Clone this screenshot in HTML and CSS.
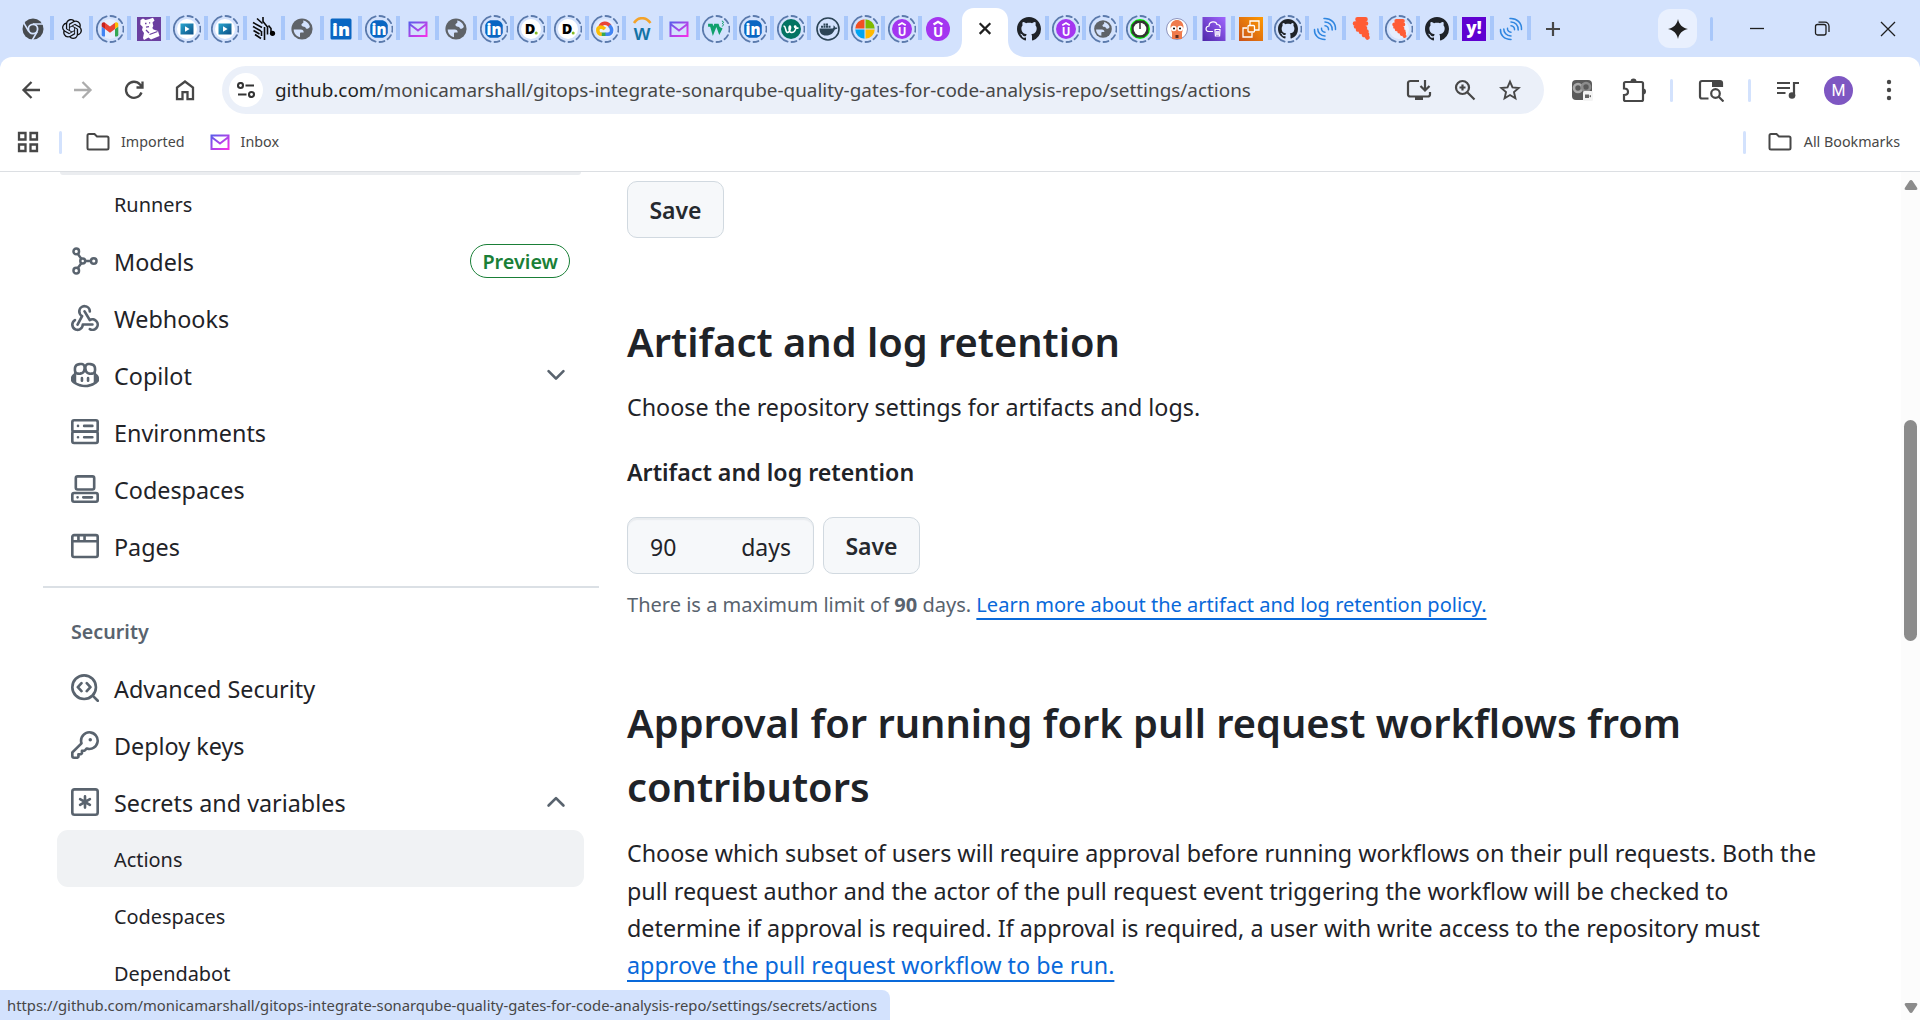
FILE: index.html
```html
<!DOCTYPE html>
<html lang="en">
<head>
<meta charset="utf-8">
<title>Actions settings</title>
<link rel="stylesheet" href="styles.css">
</head>
<body>
<svg class="defs" width="0" height="0" aria-hidden="true">
  <defs>
    <linearGradient id="mailGrad" x1="0" y1="0" x2="1" y2="1"><stop offset="0" stop-color="#5b5bea"/><stop offset="1" stop-color="#f531e8"/></linearGradient>
    <linearGradient id="playGrad" x1="0" y1="0" x2="1" y2="1"><stop offset="0" stop-color="#2ba7cf"/><stop offset="1" stop-color="#0b4f86"/></linearGradient>
    <linearGradient id="purpleGrad" x1="0" y1="1" x2="1" y2="0"><stop offset="0" stop-color="#4d27a8"/><stop offset="1" stop-color="#a166ff"/></linearGradient>
    <linearGradient id="orangeGrad" x1="0" y1="1" x2="1" y2="0"><stop offset="0" stop-color="#c8511b"/><stop offset="1" stop-color="#f90"/></linearGradient>
    <clipPath id="round"><circle cx="14" cy="14" r="9.800"/></clipPath>
  </defs>
  <symbol id="ring" viewBox="0 0 28 28">
    <g fill="none" stroke="#5b7aac" stroke-width="1.8" stroke-linecap="round"><path d="M10.6 1.4A13 13 0 0 0 10.6 26.6"/><path d="M14.5 1A13 13 0 0 1 14.5 27" stroke-dasharray="5.3 3.6"/></g>
  </symbol>
  <symbol id="chrome" viewBox="0 0 24 24">
    <circle cx="12" cy="12" r="10.500" fill="#474b4f"/><circle cx="12" cy="12" r="4.600" fill="#474b4f" stroke="#d3e2fd" stroke-width="1.800"/>
    <path d="M12 7h10M7.800 14.500 2.800 6M16.300 14.500 11.300 23" stroke="#d3e2fd" stroke-width="1.500"/>
  </symbol>
  <symbol id="openai" viewBox="0 0 24 24"><path fill="#111" d="M22.2819 9.8211a5.9847 5.9847 0 0 0-.5157-4.9108 6.0462 6.0462 0 0 0-6.5098-2.9A6.0651 6.0651 0 0 0 4.9807 4.1818a5.9847 5.9847 0 0 0-3.9977 2.9 6.0462 6.0462 0 0 0 .7427 7.0966 5.98 5.98 0 0 0 .511 4.9107 6.051 6.051 0 0 0 6.5146 2.9001A5.9847 5.9847 0 0 0 13.2599 24a6.0557 6.0557 0 0 0 5.7718-4.2058 5.9894 5.9894 0 0 0 3.9977-2.9001 6.0557 6.0557 0 0 0-.7475-7.0729zm-9.022 12.6081a4.4755 4.4755 0 0 1-2.8764-1.0408l.1419-.0804 4.7783-2.7582a.7948.7948 0 0 0 .3927-.6813v-6.7369l2.02 1.1686a.071.071 0 0 1 .038.052v5.5826a4.504 4.504 0 0 1-4.4945 4.4944zm-9.6607-4.1254a4.4708 4.4708 0 0 1-.5346-3.0137l.142.0852 4.783 2.7582a.7712.7712 0 0 0 .7806 0l5.8428-3.3685v2.3324a.0804.0804 0 0 1-.0332.0615L9.74 19.9502a4.4992 4.4992 0 0 1-6.1408-1.6464zM2.3408 7.8956a4.485 4.485 0 0 1 2.3655-1.9728V11.6a.7664.7664 0 0 0 .3879.6765l5.8144 3.3543-2.0201 1.1685a.0757.0757 0 0 1-.071 0l-4.8303-2.7865A4.504 4.504 0 0 1 2.3408 7.872zm16.5963 3.8558L13.1038 8.364 15.1192 7.2a.0757.0757 0 0 1 .071 0l4.8303 2.7913a4.4944 4.4944 0 0 1-.6765 8.1042v-5.6772a.79.79 0 0 0-.407-.667zm2.0107-3.0231l-.142-.0852-4.7735-2.7818a.7759.7759 0 0 0-.7854 0L9.409 9.2297V6.8974a.0662.0662 0 0 1 .0284-.0615l4.8303-2.7866a4.4992 4.4992 0 0 1 6.6802 4.66zM8.3065 12.863l-2.02-1.1638a.0804.0804 0 0 1-.038-.0567V6.0742a4.4992 4.4992 0 0 1 7.3757-3.4537l-.142.0805L8.704 5.459a.7948.7948 0 0 0-.3927.6813zm1.0976-2.3654l2.602-1.4998 2.6069 1.4998v2.9994l-2.5974 1.4997-2.6067-1.4997Z"/></symbol>
  <symbol id="gmail" viewBox="0 0 24 24"><path fill="#4285f4" d="M2 19V9l4 3v9H4a2 2 0 0 1-2-2z"/><path fill="#34a853" d="M22 19V9l-4 3v9h2a2 2 0 0 0 2-2z"/><path fill="#c5221f" d="M2 6.500C2 4 4.500 3.300 6 4.500V12L2 9z"/><path fill="#fbbc04" d="M22 6.500C22 4 19.500 3.300 18 4.500V12l4-3z"/><path fill="#ea4335" d="M6 4.500l6 4.500 6-4.500V12l-6 4.500L6 12z"/></symbol>
  <symbol id="bear" viewBox="0 0 24 24"><path fill="#6b3fa0" d="M0 0h24v24H0z"/><path fill="#fff" d="M3.500 3 6 1.500 8.500 3l4-1L16 .8l1.500 2.700-2 2 .8 3.500-1 2 1.200 1.500 4.500 1.500 1.500 5-8.500 3.500-2.500-2-4.500 2.500-1-2 1-5-2-3 .8-3-2.500-2.500z"/><path d="M12.500 17.500l8-3M8 6.500h1.500M12 5.800h1.200M9 10.200l3-.5M9 13l3 3" stroke="#6b3fa0" stroke-width="1.300"/></symbol>
  <symbol id="play" viewBox="0 0 20 20"><circle cx="10" cy="10" r="10" fill="#fff"/><path fill="url(#playGrad)" d="M3.500 4.500h13v11h-13z"/><path fill="#fff" d="M8 7.300v5.400l4.600-2.700z"/></symbol>
  <symbol id="zebra" viewBox="0 0 24 24"><g fill="none" stroke="#0a0a0a" stroke-width="1.600"><path d="M1 5.500l9 5M1 9.500l8 4.500M1.500 13.500l6 3.500M3 17.500l6 4M5 1.500l5.500 5M11 0v4.500l4.500 5.500v7.500M12.500 10v13M9.500 14v5M16.500 8.500l2.500 3v5"/></g><circle cx="20.500" cy="16.300" r="2.600"/></symbol>
  <symbol id="globe" viewBox="0 0 24 24"><circle cx="12" cy="12" r="10.600" fill="#5f6368"/><path fill="#d3e2fd" d="M3.700 12.500h7c2 0 3 1.200 3 3h-2.500c-.7 0-1.200.6-1.200 1.200v3.500C6.500 19.500 3.700 16.500 3.700 12.500zM13 3.600c3 .4 5.500 2.500 6.700 5.300.4 1.200-.5 2-1.600 2.600-1.300.7-2.300 0-2.600-1-.3-1.400-2.500-.6-3.500-1.600-1.500-1.300 0-2.200 1-2.900.8-.6.400-1.600 0-2.400z"/></symbol>
  <symbol id="tile" viewBox="0 0 24 24"><rect x="1.500" y="1.500" width="21" height="21" rx="1.500" fill="#0a66c2"/></symbol>
  <symbol id="mail" viewBox="0 0 24 24"><path d="M3.500 5.500h17v13.500h-17zM3.500 7l8.500 6.500L20.500 7" fill="none" stroke="url(#mailGrad)" stroke-width="2"/></symbol>
  <symbol id="dot" viewBox="0 0 20 20"><circle cx="10" cy="10" r="10" fill="#fff"/><circle cx="15.200" cy="14" r="1.500" fill="#86bc25"/></symbol>
  <symbol id="gcloud" viewBox="0 0 24 24"><g fill="none" stroke-width="4.200"><path stroke="#ea4335" d="M6 9.500c1.500-5 8.500-6.200 12-1"/><path stroke="#4285f4" d="M17 8c2 1.500 3 3 3 5.500 0 3-2 4.800-4.500 4.800H12"/><path stroke="#34a853" d="M12.500 18.300H7.500"/><path stroke="#fbbc04" d="M8 18.300c-5.500 0-6.500-8-1-8.800 2.500 0 3.500 1 5 2.500"/></g></symbol>
  <symbol id="greenw" viewBox="0 0 24 24"><path d="M2.500 7.500h4l2 7 2.800-7h2.400l2.500 7 2-4" fill="none" stroke="#10a06c" stroke-width="3.800"/><path d="M19 2.500c2.500 0 2.500 2.500.5 3 2 0 2 3-.5 3" fill="none" stroke="#10a06c" stroke-width="1.200"/></symbol>
  <symbol id="script" viewBox="0 0 20 20"><circle cx="10" cy="10" r="10" fill="#037362"/><path d="M2.500 7.500c2.500-1.500 1.500 5.500 4 6 2.500 0 4-6.500 2.500-6.500s-1.500 6 1.500 6.500c3.500.3 5.500-5.500 3.800-6.500-1.500-.5-1 3.500 3.200 1.800" fill="none" stroke="#fff" stroke-width="1.500"/></symbol>
  <symbol id="docker" viewBox="0 0 24 24"><circle cx="12" cy="12" r="11" fill="none" stroke="#2c4456" stroke-width="1.600"/><path fill="#2c4456" d="M3.500 11.500h13c1 0 1.300-2 .8-3 1.200.4 1.800 1.200 1.900 2 1 0 1.800.1 2.300.6-.6 1.100-1.600 1.400-2.700 1.400C17 17 13.800 18.500 10 18.500c-4.500 0-6.500-2.500-6.500-7zM5 8.800h2v2H5zM7.500 8.800h2v2h-2zM10 8.800h2v2h-2zM12.500 8.800h2v2h-2zM7.500 6.400h2v2h-2zM10 6.400h2v2h-2z"/></symbol>
  <symbol id="ms" viewBox="0 0 20 20"><path fill="#f25022" d="M0 0h9.500v9.500H0z"/><path fill="#7fba00" d="M10.500 0H20v9.500h-9.500z"/><path fill="#00a4ef" d="M0 10.500h9.500V20H0z"/><path fill="#ffb900" d="M10.500 10.500H20V20h-9.500z"/></symbol>
  <symbol id="caret" viewBox="0 0 24 24"><circle cx="12" cy="12" r="12" fill="#a435f0"/><path d="M7.500 7.500 12 4.800l4.500 2.700" fill="none" stroke="#fff" stroke-width="2.200"/></symbol>
  <symbol id="github" viewBox="0 0 16 16"><path fill="#1f2328" d="M8 0C3.580 0 0 3.580 0 8c0 3.540 2.290 6.530 5.470 7.590.4.070.55-.17.55-.38 0-.19-.01-.82-.01-1.490-2.010.37-2.530-.49-2.690-.94-.09-.23-.48-.94-.82-1.130-.28-.15-.68-.52-.01-.53.63-.01 1.080.58 1.230.82.72 1.210 1.870.87 2.330.66.070-.52.28-.87.51-1.070-1.780-.2-3.640-.89-3.640-3.950 0-.87.31-1.590.82-2.150-.08-.2-.36-1.020.08-2.120 0 0 .67-.21 2.200.82.64-.18 1.320-.27 2-.27.68 0 1.360.09 2 .27 1.530-1.040 2.200-.82 2.200-.82.44 1.100.16 1.920.08 2.120.51.56.82 1.270.82 2.150 0 3.070-1.870 3.750-3.650 3.950.29.25.54.73.54 1.480 0 1.070-.01 1.930-.01 2.200 0 .21.15.46.55.38A8.013 8.013 0 0 0 16 8c0-4.420-3.580-8-8-8z"/></symbol>
  <symbol id="clock" viewBox="0 0 20 20"><circle cx="10" cy="10" r="10" fill="#0f0"/><path fill="#333" d="M6 1.500h8L18.500 6v8L14 18.500H6L1.500 14V6z"/><circle cx="10" cy="10" r="6.300" fill="#fff"/><path d="M10 3v7" stroke="#333" stroke-width="1.500"/></symbol>
  <symbol id="argo" viewBox="0 0 24 24"><circle cx="12" cy="12" r="10.500" fill="#fff" stroke="#8d93bd"/><path fill="#ef7b4d" d="M5.500 10c0-9.500 13-9.500 13 0l-1.500 6v6H7v-6z"/><circle cx="8.800" cy="11.500" r="2.800" fill="#fff"/><circle cx="15.200" cy="11.500" r="2.800" fill="#fff"/><circle cx="9" cy="11.500" r="1"/><circle cx="15" cy="11.500" r="1"/><path d="M10.500 18h3v3h-3z" fill="#5b2d22"/></symbol>
  <symbol id="ecr" viewBox="0 0 24 24"><path fill="url(#purpleGrad)" d="M.5 0h23v24H.5z"/><g fill="none" stroke="#fff" stroke-width="1.200"><path d="M11 14.500H7c-4 0-4-5 0-5.500 0-5 7-5.500 8-1.500 2.500 0 3.500 1.500 3.300 3.500"/><path d="M12.500 12.500h6M13 13l.4 6h4.200l.4-6M14.800 14v4M16.200 14v4"/></g></symbol>
  <symbol id="ec2" viewBox="0 0 24 24"><path fill="url(#orangeGrad)" d="M0 0h24v24H0z"/><g fill="none" stroke="#fff" stroke-width="1.300"><path d="M11 8V4h9v9h-4M8 11H4v9h9v-4"/><rect x="9" y="8.500" width="6.500" height="6.500" rx="1"/></g></symbol>
  <symbol id="signal" viewBox="0 0 24 24"><g fill="none" stroke="#2f86e0" stroke-width="1.500" stroke-linecap="round"><path d="M12 8.700a3.600 3.600 0 0 1 3.500 4M12 5c4.500 0 7.300 3.500 7.200 8M11 1.500C18 1 22.800 6 22.500 12.500M12 15.300a3.600 3.600 0 0 1-3.500-4M12 19c-4.500 0-7.300-3.500-7.200-7M12 22.500C5 22.500 1.200 18 1.500 12.500"/></g></symbol>
  <symbol id="flame" viewBox="0 0 24 24"><path d="M7.500 2.300h8M5 6.500h11M6 9.500h7M8 12.500l7-1.500M11 15l5.500-.5M14 18l3-1M17.500 20.500l-1-2" fill="none" stroke="#ff5c35" stroke-width="4.600" stroke-linecap="round"/></symbol>
  <symbol id="violet" viewBox="0 0 24 24"><path fill="#5f01d1" d="M0 0h24v24H0z"/></symbol>
  <symbol id="folder" viewBox="0 0 24 20"><path d="M1.500 16V3.500c0-1 .6-1.500 1.500-1.500h5.500l2.500 2.500h10c1 0 1.500.6 1.500 1.500v10c0 1-.6 1.500-1.500 1.500h-18c-1 0-1.500-.6-1.500-1.500z" fill="none" stroke="#474747" stroke-width="2"/></symbol>
</svg>

<header class="tabs">
  <div class="group wide">
    <span class="tab"><svg class="fav"><use href="#chrome"/></svg></span>
    <span class="tab"><svg class="fav s20"><use href="#openai"/></svg></span>
    <span class="tab"><svg class="ringed" viewBox="0 0 28 28"><use href="#ring"/><circle cx="14" cy="14" r="10" fill="#e6eefe"/><use href="#gmail" x="4" y="4" width="20" height="20"/></svg></span>
    <span class="tab"><svg class="fav"><use href="#bear"/></svg></span>
    <span class="tab"><svg class="ringed" viewBox="0 0 28 28"><use href="#ring"/><use href="#play" x="4" y="4" width="20" height="20"/></svg></span>
    <span class="tab"><svg class="ringed" viewBox="0 0 28 28"><use href="#ring"/><use href="#play" x="4" y="4" width="20" height="20"/></svg></span>
    <span class="tab"><svg class="fav"><use href="#zebra"/></svg></span>
    <span class="tab"><svg class="fav"><use href="#globe"/></svg></span>
    <span class="tab"><svg class="fav" viewBox="0 0 24 24"><use href="#tile"/><text class="logo" x="12" y="19" font-size="18">in</text></svg></span>
    <span class="tab"><svg class="ringed" viewBox="0 0 28 28"><use href="#ring"/><g clip-path="url(#round)"><use href="#tile" x="4" y="4" width="20" height="20"/></g><text class="logo" x="14" y="20" font-size="15">in</text></svg></span>
    <span class="tab"><svg class="fav"><use href="#mail"/></svg></span>
    <span class="tab"><svg class="fav"><use href="#globe"/></svg></span>
  </div>
  <div class="group before">
    <span class="tab"><svg class="ringed" viewBox="0 0 28 28"><use href="#ring"/><g clip-path="url(#round)"><use href="#tile" x="4" y="4" width="20" height="20"/></g><text class="logo" x="14" y="20" font-size="15">in</text></svg></span>
    <span class="tab"><svg class="ringed" viewBox="0 0 28 28"><use href="#ring"/><use href="#dot" x="4" y="4" width="20" height="20"/><text class="logo black" x="13" y="19" font-size="14.500">D</text></svg></span>
    <span class="tab"><svg class="ringed" viewBox="0 0 28 28"><use href="#ring"/><use href="#dot" x="4" y="4" width="20" height="20"/><text class="logo black" x="13" y="19" font-size="14.500">D</text></svg></span>
    <span class="tab"><svg class="ringed" viewBox="0 0 28 28"><use href="#ring"/><circle cx="14" cy="14" r="10" fill="#e6eefe"/><use href="#gcloud" x="4" y="4" width="20" height="20"/></svg></span>
    <span class="tab"><svg class="fav" viewBox="0 0 24 24"><path d="M4 6C8-.5 16-.5 20.500 6" fill="none" stroke="#f4a32a" stroke-width="2.500"/><text class="logo teal" x="12" y="22.500" font-size="21">w</text></svg></span>
    <span class="tab"><svg class="fav"><use href="#mail"/></svg></span>
    <span class="tab"><svg class="ringed" viewBox="0 0 28 28"><use href="#ring"/><use href="#greenw" x="4" y="4" width="20" height="20"/></svg></span>
    <span class="tab"><svg class="ringed" viewBox="0 0 28 28"><use href="#ring"/><g clip-path="url(#round)"><use href="#tile" x="4" y="4" width="20" height="20"/></g><text class="logo" x="14" y="20" font-size="15">in</text></svg></span>
    <span class="tab"><svg class="ringed" viewBox="0 0 28 28"><use href="#ring"/><use href="#script" x="4" y="4" width="20" height="20"/></svg></span>
    <span class="tab"><svg class="fav"><use href="#docker"/></svg></span>
    <span class="tab"><svg class="ringed" viewBox="0 0 28 28"><use href="#ring"/><g clip-path="url(#round)"><use href="#ms" x="4" y="4" width="20" height="20"/></g></svg></span>
    <span class="tab"><svg class="ringed" viewBox="0 0 28 28"><use href="#ring"/><use href="#caret" x="4" y="4" width="20" height="20"/><text class="logo bold" x="14" y="20.500" font-size="11.500">U</text></svg></span>
    <span class="tab last"><svg class="fav" viewBox="0 0 24 24"><use href="#caret"/><text class="logo bold" x="12" y="19.500" font-size="13.500">U</text></svg></span>
  </div>
  <div class="active">
    <svg class="shape" width="84" height="49" viewBox="0 0 84 49"><path fill="#fff" d="M0 49c12 0 19-7 19-17V12C19 5 24 0 31 0h22c7 0 12 5 12 12v20c0 10 7 17 19 17z"/><path d="M36.700 15.300l10.600 10.600M47.300 15.300 36.700 25.900" stroke="#1f1f1f" stroke-width="2.200"/></svg>
  </div>
  <div class="group after">
    <span class="tab"><svg class="fav"><use href="#github"/></svg></span>
    <span class="tab"><svg class="ringed" viewBox="0 0 28 28"><use href="#ring"/><use href="#caret" x="4" y="4" width="20" height="20"/><text class="logo bold" x="14" y="20.500" font-size="11.500">U</text></svg></span>
    <span class="tab"><svg class="ringed" viewBox="0 0 28 28"><use href="#ring"/><use href="#globe" x="4" y="4" width="20" height="20"/></svg></span>
    <span class="tab"><svg class="ringed" viewBox="0 0 28 28"><use href="#ring"/><use href="#clock" x="4" y="4" width="20" height="20"/></svg></span>
    <span class="tab"><svg class="fav"><use href="#argo"/></svg></span>
    <span class="tab"><svg class="fav"><use href="#ecr"/></svg></span>
    <span class="tab"><svg class="fav"><use href="#ec2"/></svg></span>
    <span class="tab"><svg class="ringed" viewBox="0 0 28 28"><use href="#ring"/><use href="#github" x="4" y="4" width="20" height="20"/></svg></span>
    <span class="tab"><svg class="fav"><use href="#signal"/></svg></span>
    <span class="tab"><svg class="fav"><use href="#flame"/></svg></span>
    <span class="tab"><svg class="ringed" viewBox="0 0 28 28"><use href="#ring"/><circle cx="14" cy="14" r="10" fill="#e6eefe"/><use href="#flame" x="5" y="4" width="20" height="20"/></svg></span>
    <span class="tab"><svg class="fav"><use href="#github"/></svg></span>
    <span class="tab"><svg class="fav" viewBox="0 0 24 24"><use href="#violet"/><text class="logo" x="12" y="17" font-size="17">y!</text></svg></span>
    <span class="tab"><svg class="fav"><use href="#signal"/></svg></span>
  </div>
  <svg class="plus" width="16" height="16" viewBox="0 0 16 16"><path d="M8 1v14M1 8h14" stroke="#474747" stroke-width="2.200"/></svg>
  <div class="window">
    <span class="gemini"><svg width="20" height="20" viewBox="0 0 20 20"><path fill="#1f1f1f" d="M10 0c1 5.500 4.500 9 10 10-5.500 1-9 4.500-10 10C9 14.500 5.500 11 0 10 5.500 9 9 5.500 10 0z"/></svg></span>
    <i class="divider"></i>
    <svg class="minimize" width="14" height="14" viewBox="0 0 14 14"><path d="M0 6.500h14" stroke="#1f1f1f" stroke-width="1.300"/></svg>
    <svg class="restore" width="16" height="16" viewBox="0 0 16 16"><g fill="none" stroke="#1f1f1f" stroke-width="1.300"><rect x="1.500" y="3.500" width="10.500" height="10.500" rx="2"/><path d="M4.500 1.200h6.500a4 4 0 0 1 4 4V11"/></g></svg>
    <svg class="close" width="16" height="16" viewBox="0 0 16 16"><path d="M1 1l14 14M15 1 1 15" stroke="#1f1f1f" stroke-width="1.300"/></svg>
  </div>
</header>

<section class="chrome">
  <div class="toolbar">
    <nav class="nav">
      <svg width="26" height="26" viewBox="0 0 26 26"><path d="M21 13H5M12.500 5l-8 8 8 8" fill="none" stroke="#474747" stroke-width="2.300"/></svg>
      <svg width="26" height="26" viewBox="0 0 26 26"><path d="M4 13h16M12.500 5l8 8-8 8" fill="none" stroke="#acacac" stroke-width="2.300"/></svg>
      <svg width="26" height="26" viewBox="0 0 26 26"><path d="M20.500 15.500A8 8 0 1 1 19 7.500l2 2.500M21.500 4.500v6h-6" fill="none" stroke="#474747" stroke-width="2.300"/></svg>
      <svg width="26" height="26" viewBox="0 0 26 26"><path d="M5 22.200V10.500l8-6 8 6v11.700h-5.500v-7h-5v7z" fill="none" stroke="#474747" stroke-width="2.300"/></svg>
    </nav>
    <div class="omnibox">
      <span class="site"><svg width="18" height="16" viewBox="0 0 18 16"><g fill="none" stroke="#333" stroke-width="2.100"><circle cx="3.500" cy="3.500" r="2.500"/><circle cx="14.500" cy="12.500" r="2.500"/><path d="M8.500 3.500H17M1 12.500h8.500"/></g></svg></span>
      <span class="url">github.com<span class="path">/monicamarshall/gitops-integrate-sonarqube-quality-gates-for-code-analysis-repo/settings/actions</span></span>
      <div class="actions">
        <svg width="26" height="24" viewBox="0 0 26 24"><path d="M13 3H4.500C3 3 2 4 2 5v11.500c0 1 1 2 2.500 2h17c1.500 0 2.500-1 2.500-2V14M19 2v10M14.500 8l4.500 4.500L23.500 8" fill="none" stroke="#474747" stroke-width="2.200"/><path fill="#474747" d="M9 18h8v4H9z"/></svg>
        <svg width="24" height="24" viewBox="0 0 24 24"><g fill="none" stroke="#474747" stroke-width="2.200"><circle cx="9.500" cy="9.500" r="6.500"/><path d="M14.500 14.500l7 7M6.500 9.500h6M9.500 6.500v6"/></g></svg>
        <svg width="24" height="24" viewBox="0 0 24 24"><path d="M12 3.700l2.500 5.700 6.200.6-4.700 4.100 1.400 6.100L12 17l-5.400 3.200L8 14.100 3.300 10l6.200-.6z" fill="none" stroke="#474747" stroke-width="1.900"/></svg>
      </div>
    </div>
    <div class="tools">
      <svg class="ext" width="22" height="22" viewBox="0 0 22 22"><rect x="1" y="1" width="20" height="20" rx="4" fill="#5a5a5a"/><circle cx="7" cy="9" r="4" fill="none" stroke="#a9a9a9" stroke-width="2.600"/><circle cx="15" cy="8" r="4" fill="none" stroke="#8c8c8c" stroke-width="2.600"/><rect x="12" y="12" width="10" height="10" rx="1.500" fill="#f4f4f4"/><path fill="#666" d="M14 15.500h4v3.500h-4zM18 17l2-1v2.500z"/></svg>
      <svg class="puzzle" width="26" height="26" viewBox="0 0 26 26"><path d="M3 6.500C3 5.500 3.500 5 4.500 5h16c1 0 1.500.5 1.500 1.500v16c0 1-.5 1.500-1.500 1.500h-16C3.500 24 3 23.500 3 22.500V18c3 0 4-1.500 4-3.300S6 11.500 3 11.500z" fill="none" stroke="#474747" stroke-width="2.200"/><path fill="#474747" d="M9.500 4.500a3 3 0 0 1 6 0zM22 11.500a3 3 0 0 1 0 6z"/></svg>
      <i class="bar"></i>
      <svg class="lens" width="26" height="24" viewBox="0 0 26 24"><g fill="none" stroke="#474747" stroke-width="2.200"><path d="M24 9V5c0-1.300-.7-2-2-2H4C2.700 3 2 3.700 2 5v13.500c0 1.300.7 2 2 2h6.500"/><circle cx="17.500" cy="15.500" r="4.300"/><path d="M20.500 18.500l5 5"/></g><path fill="#474747" d="M14 3h10v6H14z"/></svg>
      <i class="bar"></i>
      <svg class="media" width="24" height="20" viewBox="0 0 24 20"><path d="M1 3h13M1 8h13M1 13h8.500M18 16V3h5" fill="none" stroke="#474747" stroke-width="2.200"/><circle cx="16" cy="15.500" r="3.300" fill="#474747"/></svg>
      <span class="avatar">M</span>
      <svg class="dots" width="6" height="22" viewBox="0 0 6 22"><g fill="#474747"><circle cx="3" cy="3" r="2.200"/><circle cx="3" cy="11" r="2.200"/><circle cx="3" cy="19" r="2.200"/></g></svg>
    </div>
  </div>
  <div class="bookmarks">
    <svg class="grid" width="22" height="22" viewBox="0 0 22 22"><path d="M2 2h6.500v6.500H2zM13.500 2H20v6.500h-6.500zM2 13.500h6.500V20H2zM13.500 13.500H20V20h-6.500z" fill="none" stroke="#474747" stroke-width="2.300"/></svg>
    <i class="bar"></i>
    <svg class="folder"><use href="#folder"/></svg>
    <span class="imported">Imported</span>
    <svg class="fav"><use href="#mail"/></svg>
    <span class="inbox">Inbox</span>
    <i class="bar right"></i>
    <svg class="folder"><use href="#folder"/></svg>
    <span class="all">All Bookmarks</span>
  </div>
</section>

<div class="page">
  <aside class="sidebar">
    <div class="selected"></div>
    <a class="row sub"><span>Runners</span></a>
    <a class="row"><svg class="oct" viewBox="0 0 16 16"><g fill="none" stroke="currentColor" stroke-width="1.400"><circle cx="3" cy="2.500" r="1.600"/><circle cx="3" cy="13.500" r="1.600"/><circle cx="6.700" cy="8" r="1.400"/><circle cx="13" cy="8" r="1.600"/><path d="M3.800 3.900 6 6.800M3.800 12.100 6 9.200M8 8h3.500"/></g></svg><span>Models</span><b class="preview">Preview</b></a>
    <a class="row"><svg class="oct" viewBox="0 0 16 16"><path fill="currentColor" d="M5.500 4.250a2.250 2.250 0 0 1 4.500 0 .75.75 0 0 0 1.500 0 3.750 3.750 0 1 0-6.140 2.889l-2.272 4.258a.75.75 0 0 0 1.324.706L7 7.250a.75.75 0 0 0-.309-1.015A2.250 2.250 0 0 1 5.500 4.250Z"/><path fill="currentColor" d="M7.364 3.607a.75.75 0 0 1 1.030.257l2.608 4.349a3.750 3.750 0 1 1-.628 6.785.75.75 0 0 1 .752-1.299 2.250 2.250 0 1 0-.033-3.880.75.75 0 0 1-1.030-.256L7.107 4.636a.75.75 0 0 1 .257-1.030Z"/><path fill="currentColor" d="M2.900 8.776A.75.75 0 0 1 2.625 9.800 2.250 2.250 0 1 0 6 11.750a.75.75 0 0 1 .75-.751h5.500a.75.75 0 0 1 0 1.500H7.425a3.751 3.751 0 1 1-5.550-3.998.75.75 0 0 1 1.024.274Z"/></svg><span>Webhooks</span></a>
    <a class="row"><svg class="oct" viewBox="0 0 16 16"><path fill="currentColor" d="M7.998 15.035c-4.562 0-7.873-2.914-7.998-3.749V9.338c.085-.628.677-1.686 1.588-2.065.013-.07.024-.143.036-.218.029-.183.06-.384.126-.612-.201-.508-.254-1.084-.254-1.656 0-.87.128-1.769.693-2.484.579-.733 1.494-1.124 2.724-1.261 1.206-.134 2.262.034 2.944.765.05.053.096.108.139.165.044-.057.094-.112.143-.165.682-.731 1.738-.899 2.944-.765 1.230.137 2.145.528 2.724 1.261.566.715.693 1.614.693 2.484 0 .572-.053 1.148-.254 1.656.066.228.098.429.126.612.012.076.024.148.037.218.924.385 1.522 1.471 1.591 2.095v1.872c0 .766-3.351 3.795-8.002 3.795Zm0-1.485c2.280 0 4.584-1.110 5.002-1.433V7.862l-.023-.116c-.49.210-1.075.291-1.727.291-1.146 0-2.059-.327-2.710-.991A3.222 3.222 0 0 1 8 6.303a3.240 3.240 0 0 1-.544.743c-.65.664-1.563.991-2.710.991-.652 0-1.236-.081-1.727-.291l-.023.116v4.255c.419.323 2.722 1.433 5.002 1.433ZM6.762 2.830c-.193-.206-.637-.413-1.682-.297-1.019.113-1.479.404-1.713.7-.247.312-.369.789-.369 1.554 0 .793.129 1.171.308 1.371.162.181.519.379 1.442.379.853 0 1.339-.235 1.638-.54.315-.322.527-.827.617-1.553.117-.935-.037-1.395-.241-1.614Zm4.155-.297c-1.044-.116-1.488.091-1.681.297-.204.219-.359.679-.242 1.614.091.726.303 1.231.618 1.553.299.305.784.54 1.638.54.922 0 1.280-.198 1.442-.379.179-.2.308-.578.308-1.371 0-.765-.123-1.242-.37-1.554-.233-.296-.693-.587-1.713-.7Z"/><path fill="currentColor" d="M6.250 9.037a.75.75 0 0 1 .75.75v1.501a.75.75 0 0 1-1.500 0V9.787a.75.75 0 0 1 .75-.75Zm4.250.75v1.501a.75.75 0 0 1-1.500 0V9.787a.75.75 0 0 1 1.500 0Z"/></svg><span>Copilot</span><svg class="chev" viewBox="0 0 16 16"><path fill="currentColor" d="M12.780 5.220a.749.749 0 0 1 0 1.060l-4.250 4.250a.749.749 0 0 1-1.060 0L3.220 6.280a.749.749 0 1 1 1.060-1.060L8 8.939l3.720-3.719a.749.749 0 0 1 1.060 0Z"/></svg></a>
    <a class="row"><svg class="oct" viewBox="0 0 16 16"><g fill="none" stroke="currentColor" stroke-width="1.500" stroke-linecap="round"><rect x=".75" y="1.250" width="14.500" height="6.500" rx="1"/><rect x=".75" y="7.750" width="14.500" height="6.500" rx="1"/><path d="M4 4.500h.01M7.500 4.500h4.700M4 11h.01M7.500 11h4.700"/></g></svg><span>Environments</span></a>
    <a class="row"><svg class="oct" viewBox="0 0 16 16"><g fill="none" stroke="currentColor" stroke-width="1.500" stroke-linecap="round"><rect x="2.750" y=".75" width="10.500" height="7.500" rx="1"/><rect x=".75" y="10.250" width="14.500" height="5" rx="1"/><path d="M3.750 12.750h.01M7 12.750h5"/></g></svg><span>Codespaces</span></a>
    <a class="row"><svg class="oct" viewBox="0 0 16 16"><path d="M1.750 1.750h12.500a1 1 0 0 1 1 1v10.500a1 1 0 0 1-1 1H1.750a1 1 0 0 1-1-1V2.750a1 1 0 0 1 1-1zM.75 5.250h14.500M4.250 2v3M7.750 2v3" fill="none" stroke="currentColor" stroke-width="1.500"/></svg><span>Pages</span></a>
    <hr class="rule">
    <h3 class="label">Security</h3>
    <a class="row"><svg class="oct" viewBox="0 0 16 16"><g fill="none" stroke="currentColor" stroke-width="1.500" stroke-linecap="round" stroke-linejoin="round"><circle cx="7.500" cy="7.500" r="6.750"/><path d="M12.500 12.500l2.800 2.800M6 5.200 3.900 7.500 6 9.800M9 5.200l2.100 2.300L9 9.800"/></g></svg><span>Advanced Security</span></a>
    <a class="row"><svg class="oct" viewBox="0 0 16 16"><path fill="currentColor" d="M10.500 0a5.499 5.499 0 1 1-1.288 10.848l-.932.932a.749.749 0 0 1-.53.220H7v.75a.749.749 0 0 1-.22.530l-.5.5a.749.749 0 0 1-.53.220H5v.75a.749.749 0 0 1-.22.530l-.5.5a.749.749 0 0 1-.53.220h-2A1.750 1.750 0 0 1 0 14.250v-2c0-.199.079-.389.220-.53l4.932-4.932A5.500 5.500 0 0 1 10.500 0Zm-4 5.500c-.001.431.069.86.205 1.269a.75.75 0 0 1-.181.768L1.500 12.560v1.690c0 .138.112.25.250.25h1.690l.06-.06v-1.190a.75.75 0 0 1 .75-.75h1.190l.06-.06v-1.190a.75.75 0 0 1 .75-.75h1.190l1.023-1.025a.75.75 0 0 1 .768-.18A4 4 0 1 0 6.500 5.500ZM11 6a1 1 0 1 1 0-2 1 1 0 0 1 0 2Z"/></svg><span>Deploy keys</span></a>
    <a class="row"><svg class="oct" viewBox="0 0 16 16"><g fill="none" stroke="currentColor" stroke-width="1.500" stroke-linecap="round"><rect x=".75" y=".75" width="14.500" height="14.500" rx="1.300"/><path d="M8 4.800v6.400M5.200 6.400l5.600 3.200M10.800 6.400 5.200 9.600"/></g></svg><span>Secrets and variables</span><svg class="chev" viewBox="0 0 16 16"><path fill="currentColor" d="M3.220 10.530a.749.749 0 0 1 0-1.060l4.250-4.250a.749.749 0 0 1 1.060 0l4.250 4.250a.749.749 0 1 1-1.060 1.060L8 6.811 4.280 10.530a.749.749 0 0 1-1.060 0Z"/></svg></a>
    <a class="row sub hover"><span>Actions</span></a>
    <a class="row sub"><span>Codespaces</span></a>
    <a class="row sub"><span>Dependabot</span></a>
  </aside>
  <main class="main">
    <button class="btn">Save</button>
    <h2 class="h2 first">Artifact and log retention</h2>
    <p class="text">Choose the repository settings for artifacts and logs.</p>
    <h4 class="h4">Artifact and log retention</h4>
    <div class="form">
      <div class="input"><span>90</span><span>days</span></div>
      <button class="btn">Save</button>
    </div>
    <p class="note">There is a maximum limit of <b>90</b> days. <a class="link">Learn more about the artifact and log retention policy.</a></p>
    <h2 class="h2 second">Approval for running fork pull request workflows from<br>contributors</h2>
    <p class="text approval">Choose which subset of users will require approval before running workflows on their pull requests. Both the<br>pull request author and the actor of the pull request event triggering the workflow will be checked to<br>determine if approval is required. If approval is required, a user with write access to the repository must<br><a class="link">approve the pull request workflow to be run.</a></p>
  </main>
  <div class="scroll">
    <svg width="14" height="12" viewBox="0 0 14 12"><path fill="#8b8b8b" d="M7 1c.7 0 1.200.4 1.600 1l4.600 7c.5 1 0 2-1.200 2H2C.8 11 .3 10 .8 9l4.600-7c.4-.6.900-1 1.600-1z"/></svg>
    <i class="thumb"></i>
    <svg width="14" height="12" viewBox="0 0 14 12"><path fill="#8b8b8b" d="M7 11c-.7 0-1.200-.4-1.600-1L.8 3C.3 2 .8 1 2 1h10c1.200 0 1.700 1 1.200 2l-4.600 7c-.4.600-.9 1-1.600 1z"/></svg>
  </div>
</div>
<div class="status">https://github.com/monicamarshall/gitops-integrate-sonarqube-quality-gates-for-code-analysis-repo/settings/secrets/actions</div>
</body>
</html>
```
FILE: styles.css
```css
* { box-sizing: border-box; }
body { margin: 0; width: 1920px; height: 1020px; overflow: hidden; background: #fff; font-family: "Noto Sans", "Open Sans", sans-serif; color: #1f2328; display: flex; flex-direction: column; }
svg { display: block; flex: none; }
.defs { position: absolute; }

/* tab strip */
.tabs { height: 69px; flex: none; display: flex; align-items: flex-start; background: #d3e2fd; padding-left: 16px; }
.group { display: flex; height: 57px; }
.tab { width: 37.1px; flex: none; display: flex; align-items: center; justify-content: center; padding-right: 4px; background: linear-gradient(#a8c7fa, #a8c7fa) right 16px / 4px 24px no-repeat; }
.wide .tab { width: 38.45px; }
.tab.last { width: 35.1px; background: none; }
.fav { width: 24px; height: 24px; }
.fav.s20 { width: 20px; height: 20px; }
.ringed { width: 28px; height: 28px; }
.logo { font-family: "Open Sans", sans-serif; font-weight: 800; fill: #fff; text-anchor: middle; }
.logo.black { fill: #000; }
.logo.bold { font-weight: 700; }
.logo.teal { font-weight: 600; fill: #1473a5; }
.active { width: 54.5px; height: 57px; display: flex; justify-content: center; align-items: flex-end; }
.shape { margin: 0 -20px; }
.plus { margin: 21px 0 0 14px; }
.window { display: flex; align-items: center; height: 57px; margin-left: auto; padding-right: 24px; }
.gemini { width: 39px; height: 39px; border-radius: 12px; background: #e9f0fe; display: flex; align-items: center; justify-content: center; }
.divider { width: 3px; height: 24px; background: #a8c7fa; margin-left: 13px; border-radius: 2px; }
.minimize { margin-left: 37px; }
.restore { margin-left: 50px; }
.close { margin-left: 50px; }

/* toolbar */
.chrome { height: 115px; flex: none; margin-top: -12px; background: #fff; border-radius: 12px 12px 0 0; border-bottom: 1px solid #dcdfe3; }
.toolbar { height: 66px; display: flex; align-items: center; }
.nav { display: flex; gap: 25px; padding-left: 19px; width: 222px; }
.omnibox { width: 1322px; height: 48px; border-radius: 24px; background: #ebf0f9; display: flex; align-items: center; padding: 0 22px 0 7px; }
.site { width: 34px; height: 34px; border-radius: 50%; background: #fff; display: flex; align-items: center; justify-content: center; }
.url { margin-left: 12px; font-size: 18.9px; line-height: 30px; white-space: nowrap; color: #1f1f1f; }
.path { color: #474747; }
.actions { margin-left: auto; display: flex; align-items: center; gap: 21px; }
.tools { display: flex; align-items: center; }
.ext { margin-left: 27px; }
.puzzle { margin-left: 28px; }
.bar { width: 3px; height: 23px; border-radius: 2px; background: #d3e2fd; flex: none; }
.puzzle + .bar { margin-left: 23px; }
.lens { margin-left: 25px; }
.lens + .bar { margin-left: 24px; }
.media { margin-left: 25px; }
.avatar { width: 29px; height: 29px; border-radius: 50%; background: #7e57c2; color: #fff; font: 16px/30px "Roboto", sans-serif; text-align: center; margin-left: 24px; }
.dots { margin-left: 33px; }
.bookmarks { height: 38px; display: flex; align-items: center; padding: 0 20px 0 17px; font-size: 14.3px; line-height: 20px; color: #474747; }
.bookmarks .bar { margin: 0 24px 0 20px; }
.bookmarks .bar.right { margin: 0 22px 0 auto; }
.folder { width: 24px; height: 20px; }
.imported { margin: 0 23px 0 11px; }
.inbox { margin-left: 9px; }
.all { margin-left: 12px; }

/* page */
.page { flex: 1; display: flex; overflow: hidden; }
.sidebar { width: 627px; padding: 0 28px 0 43px; }
.selected { height: 3px; margin: 0 18px 0 17px; background: #ebedf0; border-radius: 0 0 8px 8px; }
.row { display: flex; align-items: center; height: 57px; margin: 0 15px 0 14px; padding: 0 14px; font-size: 23.35px; color: #1f2328; }
.row > span { margin-left: 15px; padding-top: 2px; }
.row.sub { font-size: 19.9px; padding-left: 57px; border-radius: 11px; }
.row.sub > span { margin-left: 0; }
.row.hover { background: #f0f2f4; }
.oct { width: 28px; height: 28px; color: #59636e; }
.chev { width: 28px; height: 28px; margin-left: auto; color: #59636e; }
.preview { margin-left: auto; height: 34px; border: 1px solid #1a7f37; border-radius: 17px; padding: 0 11px; font-weight: 600; font-size: 19.8px; line-height: 33px; color: #1a7f37; }
.rule { height: 2px; border: 0; margin: 12px 0 0; background: #dbe0e5; }
.label { margin: 0; height: 71px; padding: 15px 0 0 28px; font-size: 19.7px; line-height: 57px; font-weight: 600; color: #59636e; }
.main { width: 1274px; padding-top: 9px; }
.btn { display: block; height: 57px; width: 97px; border: 1px solid #d1d9e0; border-radius: 10px; background: #f6f8fa; font: 600 23px/55px "Noto Sans", sans-serif; color: #25292e; padding: 1px 0 0; text-align: center; }
.h2 { margin: 0; font-size: 39.8px; line-height: 64px; font-weight: 600; white-space: nowrap; }
.h2.first { margin-top: 72px; }
.h2.second { margin-top: 70px; }
.text { margin: 15px 0 0; font-size: 23.3px; line-height: 37.3px; white-space: nowrap; }
.text.approval { margin-top: 16px; }
.h4 { margin: 28px 0 0; font-size: 23.2px; line-height: 37px; font-weight: 600; }
.form { display: flex; gap: 9px; margin-top: 26px; }
.input { width: 187px; height: 57px; border: 1px solid #d1d9e0; border-radius: 10px; background: #f6f8fa; box-shadow: inset 0 2px 1px #e9ecef; display: flex; justify-content: space-between; padding: 1px 22px 0; font-size: 23px; line-height: 57px; }
.note { margin: 15px 0 0; font-size: 20.05px; line-height: 32px; color: #59636e; white-space: nowrap; }
.link { color: #0969da; text-decoration: underline; text-decoration-thickness: 2px; text-underline-offset: 6px; text-decoration-skip-ink: none; }
.scroll { width: 19px; background: #fcfcfc; display: flex; flex-direction: column; align-items: center; padding: 7px 0 6px; }
.thumb { width: 13px; height: 221px; margin: 229px 0 auto; border-radius: 7px; background: #8b8b8b; }

/* link preview bubble over the page */
.status { position: absolute; left: 0; top: 990px; width: 890px; height: 30px; background: #d3e2fd; border-top-right-radius: 8px; padding-left: 7px; font-size: 14.8px; line-height: 30px; color: #474747; white-space: nowrap; }
```
